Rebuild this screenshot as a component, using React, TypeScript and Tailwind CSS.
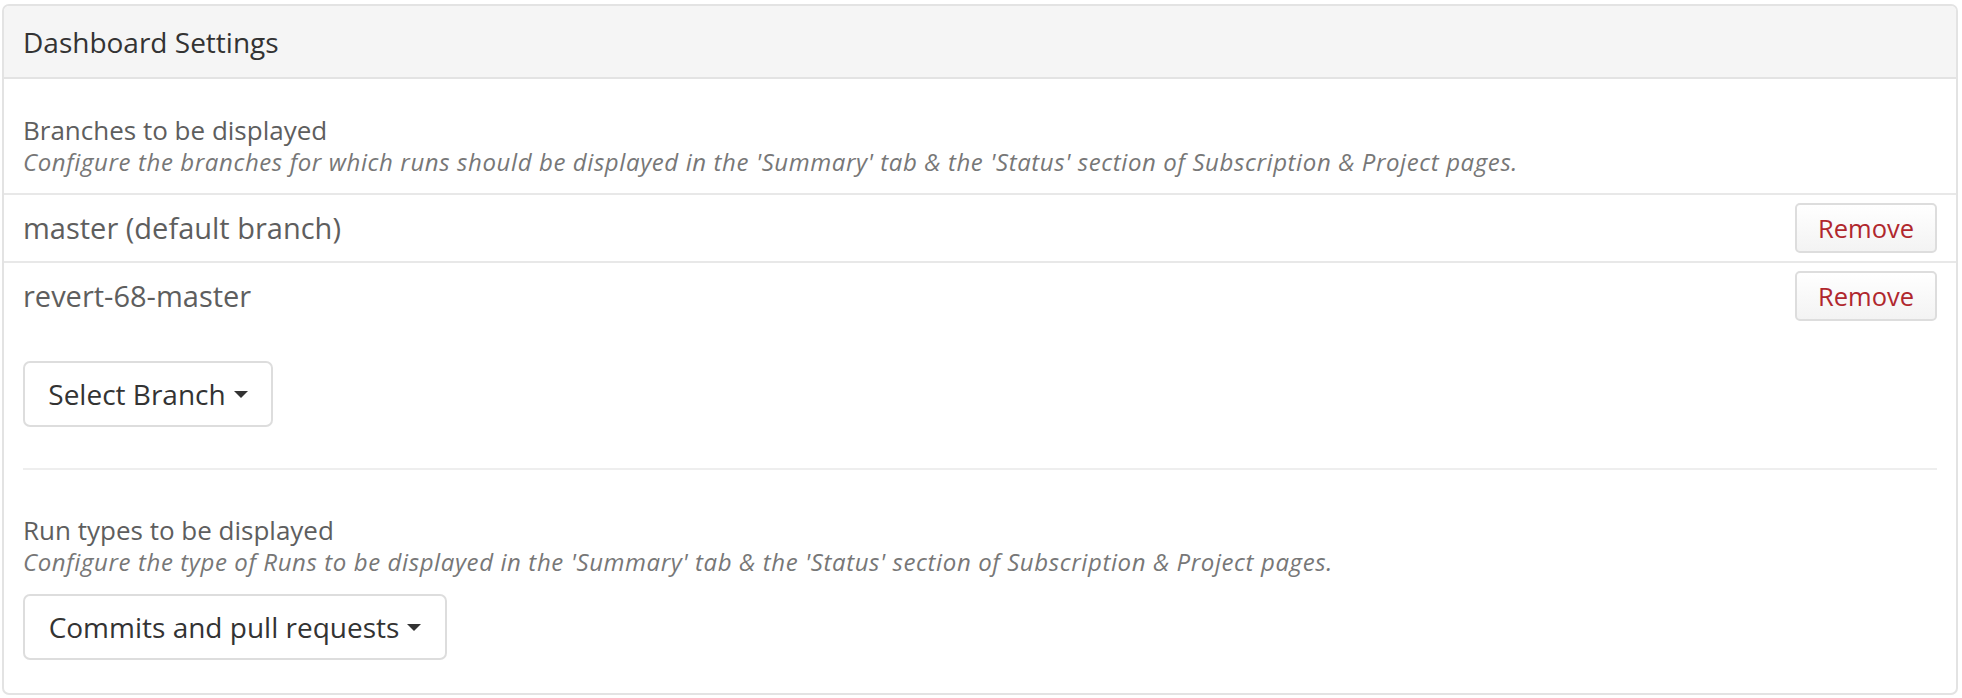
import React from 'react';

const BRANCHES = [
  { name: 'master', note: ' (default branch)' },
  { name: 'revert-68-master', note: '' },
];

const Caret = () => (
  <span className="ml-[8px] inline-block h-0 w-0 border-x-[7px] border-t-[7px] border-x-transparent border-t-[#333] align-middle" />
);

const Dropdown: React.FC<{ label: string; width: string }> = ({ label, width }) => (
  <button
    className={`${width} flex h-[66px] items-center justify-center rounded-[7px] border-2 border-[#ddd] bg-white text-[28px] text-[#333]`}
  >
    {label}
    <Caret />
  </button>
);

export default function App() {
  return (
    <div className="min-h-[698px] bg-white pl-[2px] pr-[4px] pt-[4px]" style={{ fontFamily: '"Open Sans", "Liberation Sans", sans-serif' }}>
      <div className="h-[691px] overflow-hidden rounded-[7px] border-2 border-[#e3e3e3] bg-white">
        <div className="flex h-[73px] items-center border-b-2 border-[#e3e3e3] bg-[#f5f5f5] px-[19px] text-[28px] text-[#333]">
          Dashboard Settings
        </div>

        <div className="px-[19px] pt-[34px]">
          <div className="text-[26px] leading-[34px] text-[#5e5e5e]">Branches to be displayed</div>
          <div className="text-[24px] italic leading-[30px] tracking-[0.6px] text-[#777]">
            Configure the branches for which runs should be displayed in the 'Summary' tab &amp; the 'Status' section of
            Subscription &amp; Project pages.
          </div>
        </div>

        <div className="mt-[16px]">
          {BRANCHES.map(b => (
            <div
              key={b.name}
              className="flex h-[68px] items-center justify-between border-t-2 border-[#e8e8e8] pl-[19px] pr-[19px]"
            >
              <span className="text-[29px] text-[#5e5e5e]">
                {b.name}
                {b.note}
              </span>
              <button className="h-[50px] w-[142px] rounded-[5px] border-2 border-[#ddd] bg-gradient-to-b from-white to-[#f3f3f3] text-[25.5px] text-[#b0272d]">
                Remove
              </button>
            </div>
          ))}
        </div>

        <div className="px-[19px] pt-[32px]">
          <Dropdown label="Select Branch" width="w-[250px]" />
          <div className="mt-[41px] border-t-2 border-[#eee]" />
          <div className="pt-[43px]">
            <div className="text-[26px] leading-[34px] text-[#5e5e5e]">Run types to be displayed</div>
            <div className="text-[24px] italic leading-[30px] tracking-[0.6px] text-[#777]">
              Configure the type of Runs to be displayed in the 'Summary' tab &amp; the 'Status' section of Subscription
              &amp; Project pages.
            </div>
          </div>
          <div className="mt-[17px]">
            <Dropdown label="Commits and pull requests" width="w-[424px]" />
          </div>
        </div>
      </div>
    </div>
  );
}
